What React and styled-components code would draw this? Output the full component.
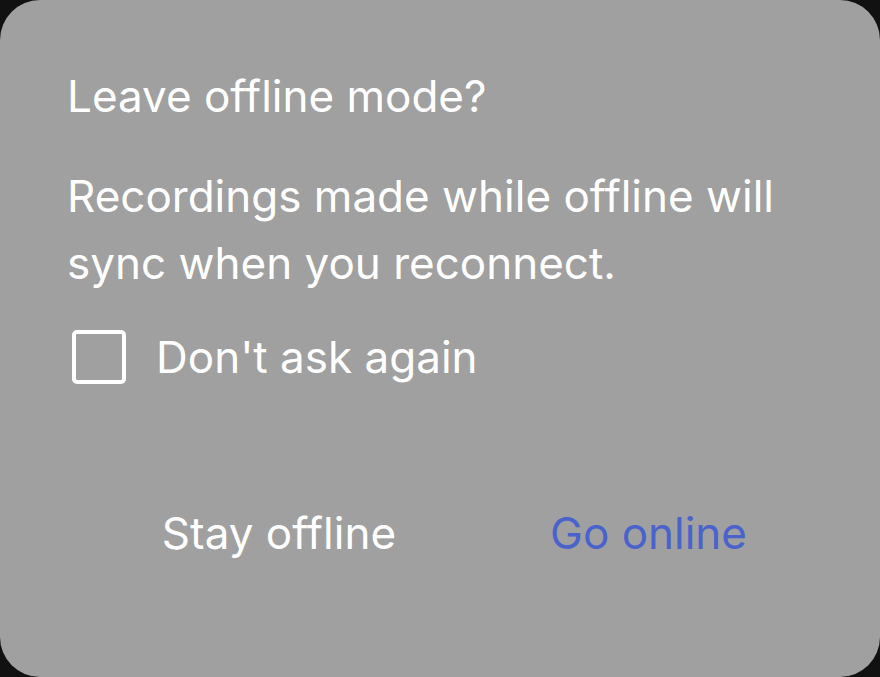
import React, { useState } from 'react'
import styled, { createGlobalStyle } from 'styled-components'

const GlobalStyle = createGlobalStyle`
    html, body {
        margin: 0;
        padding: 0;
        background: #111111;
    }
    #root {
        width: 880px;
        height: 677px;
    }
`

const Dialog = styled.div`
    box-sizing: border-box;
    width: 880px;
    height: 677px;
    background: #a0a0a0;
    border-radius: 40px;
    padding: 68px 66px 0 67px;
    display: flex;
    flex-direction: column;
    color: #ffffff;
    font-family: Inter, "Noto Sans", sans-serif;
`

const Title = styled.h2`
    margin: 0;
    font-weight: 400;
    font-size: 44px;
    line-height: 56px;
`

const Message = styled.p`
    margin: 39px 0 0 0;
    font-size: 44px;
    line-height: 67px;
`

const CheckRow = styled.label`
    display: flex;
    align-items: center;
    gap: 30px;
    margin-top: 33px;
    padding-left: 5px;
    font-size: 44px;
    cursor: pointer;
`

const Box = styled.span`
    box-sizing: border-box;
    width: 54px;
    height: 54px;
    border: 4px solid #ffffff;
    border-radius: 5px;
    background: ${p => (p.checked ? '#ffffff' : 'transparent')};
`

const Actions = styled.div`
    display: flex;
    justify-content: flex-end;
    gap: 20px;
    margin-top: auto;
    margin-bottom: 107px;
`

const ActionButton = styled.button`
    background: none;
    border: none;
    padding: 10px 67px;
    font-family: Inter, "Noto Sans", sans-serif;
    font-size: 44px;
    color: ${p => (p.primary ? '#4a63cc' : '#ffffff')};
    cursor: pointer;
`

export default function App() {
    const [checked, setChecked] = useState(false)
    return (
        <>
            <GlobalStyle />
            <Dialog>
                <Title>Leave offline mode?</Title>
                <Message>Recordings made while offline will sync when you reconnect.</Message>
                <CheckRow onClick={() => setChecked(!checked)}>
                    <Box checked={checked} />
                    Don't ask again
                </CheckRow>
                <Actions>
                    <ActionButton>Stay offline</ActionButton>
                    <ActionButton primary>Go online</ActionButton>
                </Actions>
            </Dialog>
        </>
    )
}
